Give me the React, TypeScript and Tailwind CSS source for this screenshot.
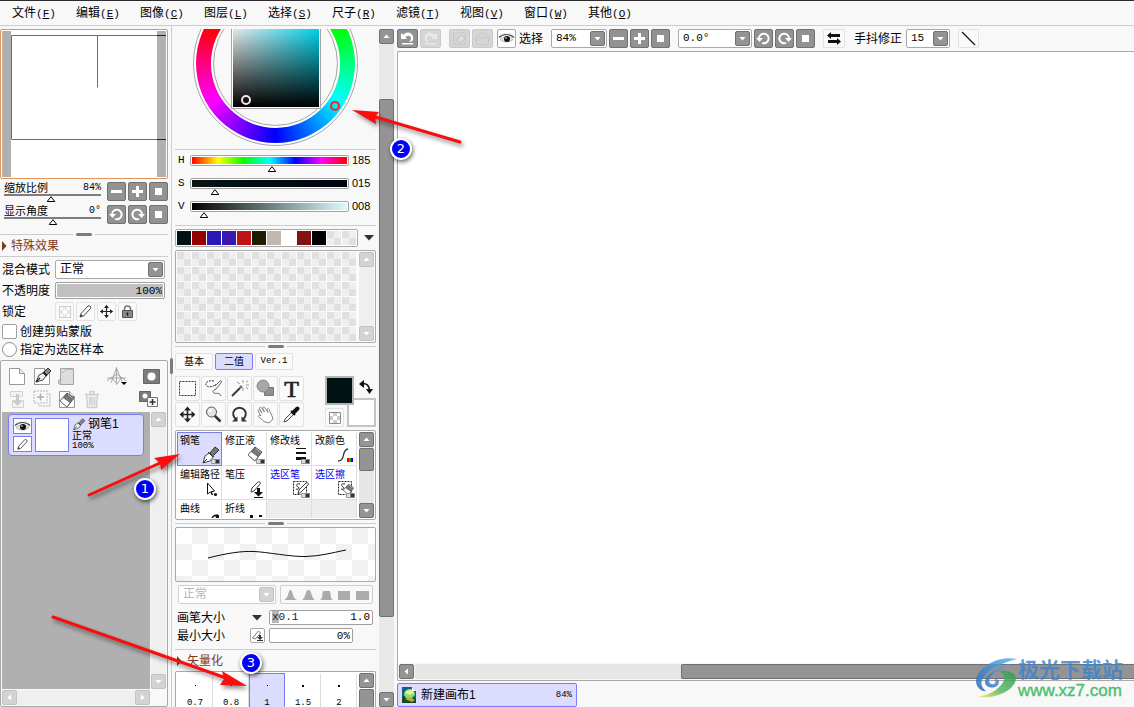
import { useState } from "react";
import type { ReactNode } from "react";

const menus = [
  ["文件", "F"], ["编辑", "E"], ["图像", "C"], ["图层", "L"], ["选择", "S"],
  ["尺子", "R"], ["滤镜", "T"], ["视图", "V"], ["窗口", "W"], ["其他", "O"],
];

const swatches = ["#001214", "#940000", "#2819b4", "#3b17b0", "#c01316", "#1c1c02", "#c2b8b2", "#ffffff", "#831213", "#000000", "", ""];

type IconProps = { className?: string };

/* ---------- icons ---------- */

function Triangle({ dir = "down", className = "w-[7px] h-[7px]" }: { dir?: string; className?: string }) {
  const paths: Record<string, string> = {
    down: "M0.5 2H6.5L3.5 5.5Z",
    up: "M0.5 5H6.5L3.5 1.5Z",
    left: "M5 0.5V6.5L1.5 3.5Z",
    right: "M2 0.5V6.5L5.5 3.5Z",
  };
  return <svg viewBox="0 0 7 7" className={className}><path d={paths[dir]} fill="currentColor" /></svg>;
}

function SectionMark() {
  return <svg viewBox="0 0 6 10" className="h-[10px] w-[6px]"><path d="M1 0v10l4.500-5z" fill="currentColor" /></svg>;
}

function MenuMark() {
  return <svg viewBox="0 0 10 6" className="h-[6px] w-[10px]"><path d="M0 0h10L5 5.500z" fill="#333" /></svg>;
}

function Minus() {
  return <svg viewBox="0 0 17 17" className="w-[17px] h-[17px]"><path d="M3 7h11v3H3z" fill="#fff" /></svg>;
}

function Plus() {
  return <svg viewBox="0 0 17 17" className="w-[17px] h-[17px]"><path d="M3 7h4V3h3v4h4v3h-4v4H7v-4H3z" fill="#fff" /></svg>;
}

function Square() {
  return <svg viewBox="0 0 17 17" className="w-[17px] h-[17px]"><path d="M5 5h7v7H5z" fill="#fff" /></svg>;
}

function RotateLeft({ flip = false }) {
  return (
    <svg viewBox="0 0 17 17" className="w-[17px] h-[17px]">
      <g transform={flip ? "matrix(-1 0 0 1 17 0)" : undefined}>
        <path d="M4 8.500a4.800 4.800 0 1 1 3 4.400" fill="none" stroke="#fff" strokeWidth="2" />
        <path d="M1 8h7l-3.500 4z" fill="#fff" />
      </g>
    </svg>
  );
}

function Undo({ flip = false }) {
  return (
    <svg viewBox="0 0 19 17" className="w-[19px] h-[17px]">
      <g transform={flip ? "matrix(-1 0 0 1 19 0)" : undefined} opacity={flip ? 0.45 : 1}>
        <path d="M3 3v6h6L7.400 7.200C10 4.500 13 5.500 13 8.500 13 10 12 11 10.500 11.500H14C17 8 14.500 2.500 10 2.500 8 2.500 6.500 3.500 5.200 4.800Z" fill="#fff" />
        <path d="M4 13h11v1.500H4z" fill="#fff" />
      </g>
    </svg>
  );
}

function Eye() {
  return (
    <svg viewBox="0 0 17 15" className="w-[17px] h-[15px]">
      <path d="M1 6.500C5 2.500 12 2.500 16 6.500" fill="none" stroke="#444" strokeWidth="1.200" />
      <path d="M2 8.500C5 5 12 5 15 8.500 12 11.500 6 12 2 8.500Z" fill="#e4e4e4" stroke="#999" strokeWidth=".7" />
      <circle cx="9" cy="8" r="3" fill="#111" />
      <circle cx="8" cy="7" r=".8" fill="#fff" />
      <path d="M3 3.500l1 1M6 2l.5 1.500M12 2l-.5 1.500M15 3.500l-1 1" stroke="#999" strokeWidth=".7" />
    </svg>
  );
}

function Pencil({ className = "w-[15px] h-[15px]" }: IconProps) {
  return (
    <svg viewBox="0 0 15 15" className={className}>
      <path d="M2 13l1-3.500L10 2c1.500-1 3.500.8 2.500 2.500L5.500 12z" fill="#fff" stroke="#444" />
      <path d="M2 13l1-3 2 2z" fill="#444" />
    </svg>
  );
}

function Nib({ className = "w-[20px] h-[20px]" }: IconProps) {
  return (
    <svg viewBox="0 0 20 20" className={className}>
      <path d="M11 6l4.500-5L19 4.500 14 9z" fill="#888" stroke="#333" />
      <path d="M9.500 6l4.500 4.500-2 1.500L8 8z" fill="#444" />
      <path d="M8 7.500L4 10.500 2 18l7-2 3.500-4.500z" fill="#eee" stroke="#333" />
      <path d="M2 18l5-5.500" stroke="#333" />
    </svg>
  );
}

function EraserShape() {
  return (
    <>
      <path d="M3 11l7-8 7 5-7 9z" fill="#777" stroke="#333" strokeWidth=".8" />
      <path d="M3 11l3-3.500 7 5-3 4.500z" fill="#fff" stroke="#666" strokeWidth=".8" />
      <path d="M11 4.500l5 4" stroke="#bbb" />
    </>
  );
}

function Move({ className = "w-[19px] h-[19px]" }: IconProps) {
  return (
    <svg viewBox="0 0 19 19" className={className}>
      <path d="M9.500 3v13M3 9.500h13" stroke="#222" strokeWidth="1.500" />
      <path d="M9.500 1l3 4h-6zM9.500 18l3-4h-6zM1 9.500l4-3v6zM18 9.500l-4-3v6z" fill="#222" />
    </svg>
  );
}

function Checks() {
  return (
    <svg viewBox="0 0 12 12" className="w-3 h-3">
      <path d="M.5.5h11v11H.5z" fill="#fff" stroke="#888" />
      <path d="M4 1h4v3H4zM1 4h3v4H1zM8 4h3v4H8zM4 8h4v3H4z" fill="#ccc" />
    </svg>
  );
}

function Page({ children }: { children?: ReactNode }) {
  return (
    <svg viewBox="0 0 20 20" className="w-5 h-5">
      <path d="M2.500 2.500h10l5 5v11h-15z" fill="#fff" stroke="#999" />
      <path d="M12.500 2.500v5h5" fill="#e6e6e6" stroke="#999" />
      {children}
    </svg>
  );
}

/* ---------- controls ---------- */

function SolidButton({ label, children, wide = false, disabled = false }: { label: string; children?: ReactNode; wide?: boolean; disabled?: boolean }) {
  return (
    <button
      type="button"
      aria-label={label}
      disabled={disabled}
      className={`${wide ? "w-[21px]" : "w-[19px]"} ${disabled ? "bg-[#d5d5d5] border-[#cacaca]" : "bg-[#929292] border-[#717171]"} h-[19px] shrink-0 flex items-center justify-center rounded-[2px] border`}
    >
      {children}
    </button>
  );
}

function ScrollButton({ dir, light = false }: { dir: string; light?: boolean }) {
  return (
    <button
      type="button"
      aria-label={`scroll ${dir}`}
      className={`${light ? "bg-[#d3d3d3] border-[#c2c2c2]" : "bg-[#949494] border-[#707070]"} w-[15px] h-[15px] shrink-0 flex items-center justify-center rounded-[2px] border text-white`}
    >
      <Triangle dir={dir} />
    </button>
  );
}

function Dropdown({ label, value, className, disabled = false }: { label: string; value: string; className: string; disabled?: boolean }) {
  return (
    <div className={`relative h-[19px] rounded-[2px] border bg-white ${disabled ? "border-[#d0d0d0]" : "border-[#a9a9a9]"} ${className}`}>
      <select aria-label={label} disabled={disabled} className={`block w-full h-[17px] appearance-none bg-transparent pl-1 leading-[17px] outline-none ${disabled ? "text-[#b5b5b5]" : ""}`}>
        <option>{value}</option>
      </select>
      <span className={`pointer-events-none absolute right-px top-px flex h-[15px] w-[15px] items-center justify-center rounded-[2px] border text-white ${disabled ? "bg-[#d3d3d3] border-[#c2c2c2]" : "bg-[#949494] border-[#707070]"}`}>
        <Triangle />
      </span>
    </div>
  );
}

function GhostButton({ label, className = "w-[19px] h-[19px]", children }: { label: string; className?: string; children?: ReactNode }) {
  return (
    <button type="button" aria-label={label} className={`${className} shrink-0 flex items-center justify-center rounded-[2px] border border-[#e2e2e2] bg-[#fafafa]`}>
      {children}
    </button>
  );
}

function Grip() {
  return (
    <div className="flex h-[7px] items-center gap-[3px]">
      <div className="h-px flex-1 bg-[#cdcdcd]" />
      <div className="h-[3px] w-4 rounded-full bg-[#7b7b7b]" />
      <div className="h-px flex-1 bg-[#cdcdcd]" />
    </div>
  );
}

function Pointer({ percent }: { percent: number }) {
  return (
    <svg viewBox="0 0 9 6" className="h-[6px] w-[9px] -translate-x-1/2" style={{ marginLeft: `${percent}%` }}>
      <path d="M4.500.7L8.300 5.500H.7z" fill="#fff" stroke="#000" />
    </svg>
  );
}

/* ---------- left column ---------- */

function NavSlider({ label, value, percent }: { label: string; value: string; percent: number }) {
  return (
    <div className="h-[19px] w-[97px]">
      <label className="flex h-[12px] items-center justify-between text-[11px] leading-[12px]">
        {label}
        <span className="font-['Liberation_Mono',monospace] text-[10px]">{value}</span>
        <input type="range" defaultValue={percent} className="sr-only" />
      </label>
      <div className="h-[2px] bg-[#7d7d7d]" />
      <Pointer percent={percent} />
    </div>
  );
}

function Navigator() {
  return (
    <>
      <div className="h-[150px] rounded-[2px] border border-[#e0935a] bg-white p-px">
        <svg viewBox="0 0 164 146" preserveAspectRatio="none" className="h-full w-full">
          <path d="M0 0h9v146H0zM155 0h9v146h-9z" fill="#b0b0b0" />
          <path d="M155 4.500H9.500v104H155M95.500 4.500v52" fill="none" stroke="#6d6d6d" />
          <path d="M155 4.500h9M155 108.500h9" stroke="#222" />
        </svg>
      </div>
      <div className="mt-[3px] flex flex-col gap-1 pl-1">
        <div className="flex h-[19px] gap-[2px]">
          <NavSlider label="缩放比例" value="84%" percent={48} />
          <div className="w-[2px]" />
          <SolidButton label="缩小"><Minus /></SolidButton>
          <SolidButton label="放大"><Plus /></SolidButton>
          <SolidButton label="重置缩放"><Square /></SolidButton>
        </div>
        <div className="flex h-[19px] gap-[2px]">
          <NavSlider label="显示角度" value="0° " percent={50} />
          <div className="w-[2px]" />
          <SolidButton label="左旋"><RotateLeft /></SolidButton>
          <SolidButton label="右旋"><RotateLeft flip /></SolidButton>
          <SolidButton label="重置角度"><Square /></SolidButton>
        </div>
      </div>
    </>
  );
}

function LayerOptions() {
  return (
    <>
      <div className="mt-[7px]"><Grip /></div>
      <h2 className="flex h-[19px] items-center gap-1 border-b border-[#cdcdcd] pb-[3px] pl-px text-[#7d3a1c]">
        <SectionMark />特殊效果
      </h2>
      <div className="flex flex-col gap-[3px] pl-[2px] pr-[3px] pt-[3px]">
        <div className="flex h-[19px] items-center">
          <span className="w-[53px]">混合模式</span>
          <Dropdown label="混合模式" value="正常" className="flex-1" />
        </div>
        <label className="flex h-[17px] items-center">
          <span className="w-[53px]">不透明度</span>
          <input defaultValue="100%" className="h-[17px] w-0 flex-1 rounded-[2px] border border-[#a0a0a0] bg-[#c0c0c0] px-[2px] text-right font-['Liberation_Mono',monospace] text-[11px] shadow-[inset_0_0_0_1px_#fff] outline-none" />
        </label>
        <div className="flex h-[19px] items-center gap-[2px]">
          <span className="w-[51px]">锁定</span>
          <GhostButton label="锁定透明"><span className="opacity-40"><Checks /></span></GhostButton>
          <GhostButton label="锁定绘画"><Pencil /></GhostButton>
          <GhostButton label="锁定移动"><Move className="h-[15px] w-[15px]" /></GhostButton>
          <GhostButton label="锁定全部">
            <svg viewBox="0 0 13 13" className="h-[13px] w-[13px]">
              <path d="M3.500 6V4a3 3 0 0 1 6 0v2" fill="none" stroke="#777" strokeWidth="1.500" />
              <path d="M1.500 5.500h10v7h-10z" fill="#888" stroke="#555" />
              <path d="M6.500 7.500v3" stroke="#111" strokeWidth="1.500" />
            </svg>
          </GhostButton>
        </div>
        <label className="flex h-[15px] items-center gap-[3px]">
          <input type="checkbox" className="h-[15px] w-[15px] appearance-none rounded-[2px] border border-[#a0a0a0] bg-white" />
          创建剪贴蒙版
        </label>
        <label className="flex h-[15px] items-center gap-[3px]">
          <input type="radio" className="h-[15px] w-[15px] appearance-none rounded-full border border-[#8c8c8c] bg-white" />
          指定为选区样本
        </label>
      </div>
    </>
  );
}

function LayerTools() {
  return (
    <div className="h-[51px] px-[5px] pt-1">
      <div className="flex h-[22px] items-center">
        <button type="button" aria-label="新建图层"><Page /></button>
        <button type="button" aria-label="新建钢笔图层" className="ml-[5px]">
          <Page>
            <path d="M12 6l4-4 3 3-4 4z" fill="#888" stroke="#333" />
            <path d="M11 7L7 9l-3 7 7-2 3-4z" fill="#eee" stroke="#444" />
            <path d="M4 16l4-4M11 6l4 4" stroke="#222" strokeWidth="1.200" />
          </Page>
        </button>
        <button type="button" aria-label="新建图层组" className="ml-[5px]">
          <svg viewBox="0 0 20 20" className="h-5 w-5">
            <path d="M3.500 2.500h13v16h-13zM3.500 12.500l-2 2v3l2 1" fill="#ddd" stroke="#a5a5a5" />
            <path d="M3.500 6.500h3l2-3h8" fill="none" stroke="#bbb" />
          </svg>
        </button>
        <button type="button" aria-label="透视尺" className="ml-[29px]">
          <svg viewBox="0 0 22 20" className="h-5 w-[22px]">
            <path d="M10.500 1v18M1 12h19M10.500 2L5 17M10.500 2l6 15M1 15l10-7 9 7M5 11l6 7 5-7" fill="none" stroke="#999" strokeWidth=".8" />
            <path d="M15 16h6l-3 3z" fill="#000" />
          </svg>
        </button>
        <button type="button" aria-label="新建蒙版" className="ml-[14px]">
          <svg viewBox="0 0 20 20" className="h-5 w-5"><path d="M1.500 3.500h16v14h-16z" fill="#7b7b7b" stroke="#666" /><circle cx="9.500" cy="10.500" r="4" fill="#fff" /></svg>
        </button>
      </div>
      <div className="flex h-[24px] items-center">
        <button type="button" aria-label="向下合并" className="opacity-40">
          <svg viewBox="0 0 20 20" className="h-5 w-5"><path d="M3.500 2.500h12v5h-12zM5.500 11.500h11v7h-11z" fill="#eee" stroke="#999" /><path d="M9 5h3v7h3l-4.500 5L6 12h3z" fill="#888" /></svg>
        </button>
        <button type="button" aria-label="复制图层" className="ml-[5px] opacity-50">
          <svg viewBox="0 0 20 20" className="h-5 w-5"><path d="M2 2h13v12H2z" fill="none" stroke="#777" strokeDasharray="2 1" /><path d="M16 5h2v12H7v-2" fill="none" stroke="#999" /><path d="M8.500 4.500v7M5 8h7" stroke="#666" strokeWidth="1.500" /></svg>
        </button>
        <button type="button" aria-label="清除图层" className="ml-[5px]"><Page><g transform="translate(0 1)"><EraserShape /></g></Page></button>
        <button type="button" aria-label="删除图层" className="ml-[5px] opacity-30">
          <svg viewBox="0 0 20 20" className="h-5 w-5"><path d="M3 5.500h14M8 5V2.500h4V5M4.500 6l1 12.500h9l1-12.500M8 8v8M10 8v8M12.500 8v8" fill="#ddd" stroke="#777" strokeWidth="1.500" /></svg>
        </button>
        <button type="button" aria-label="添加蒙版" className="ml-[35px]">
          <svg viewBox="0 0 22 20" className="h-5 w-[22px]"><path d="M2.500 2.500h11v10h-11z" fill="#7b7b7b" stroke="#666" /><circle cx="8" cy="7" r="2.500" fill="#fff" /><path d="M10.500 8.500h10v9h-10z" fill="#f4f4f4" stroke="#777" /><path d="M15.500 10v6M12.500 13h6" stroke="#333" strokeWidth="1.500" /></svg>
        </button>
      </div>
    </div>
  );
}

function LayerPanel() {
  return (
    <section className="mt-[3px] flex min-h-0 flex-1 flex-col rounded-[2px] border border-[#a9a9a9] bg-[#f8f8f8] px-px pb-px">
      <LayerTools />
      <div className="flex min-h-0 flex-1 gap-px">
        <div className="flex-1 bg-[#b0b0b0] px-[6px] pt-[2px]">
          <div className="flex h-[42px] gap-[3px] rounded-[4px] border border-[#7b7bf4] bg-[#dcdcff] p-[3px] pl-1">
            <div className="flex flex-col gap-[2px]">
              <button type="button" aria-label="显示图层" className="flex h-[16px] w-[19px] items-center justify-center border border-[#7b7bf4] bg-white"><Eye /></button>
              <button type="button" aria-label="编辑图层" className="flex h-[16px] w-[19px] items-center justify-center border border-[#7b7bf4] bg-white"><Pencil className="h-[13px] w-[13px]" /></button>
            </div>
            <div className="h-[34px] w-[34px] border border-[#7b7bf4] bg-white" />
            <div className="text-[10px] leading-[11px]">
              <div className="flex h-[12px] items-center gap-[2px] text-[12px] leading-[12px]"><Nib className="h-[13px] w-[14px]" />钢笔1</div>
              <div>正常</div>
              <div className="font-['Liberation_Mono',monospace] text-[9px] leading-[11px]">100%</div>
            </div>
          </div>
        </div>
        <div className="flex w-[15px] flex-col justify-between bg-[#efefef]">
          <ScrollButton dir="up" light />
          <ScrollButton dir="down" light />
        </div>
      </div>
      <div className="mr-4 mt-px flex justify-between bg-[#efefef]">
        <ScrollButton dir="left" light />
        <ScrollButton dir="right" light />
      </div>
    </section>
  );
}

/* ---------- middle column ---------- */

function ColorWheel() {
  return (
    <div className="flex h-[117px] items-end justify-center overflow-hidden">
      <div className="h-[165px] w-[165px] shrink-0 rounded-full border border-[#a3a3a3] bg-white p-[2px]">
        <div className="h-full w-full rounded-full bg-[conic-gradient(from_-60deg,#f00,#ff0,#0f0,#0ff,#00f,#f0f,#f00)] p-[15px]">
          <div className="h-full w-full rounded-full bg-white p-[2px]">
            <div className="relative flex h-full w-full items-center justify-center rounded-full border border-[#a3a3a3] bg-[#f8f8f8]">
              <div className="h-[90px] w-[90px] shrink-0 border border-[#a3a3a3] bg-white p-px">
                <div className="relative h-full w-full bg-[linear-gradient(to_top,#000,transparent),linear-gradient(to_right,#fff,#00e5ff)]">
                  <span className="absolute bottom-[2px] left-[8px] h-[10px] w-[10px] rounded-full border-2 border-[#f7e4e0]" />
                </div>
              </div>
              <span className="absolute -right-[3px] bottom-[14px] h-[10px] w-[10px] rounded-full border-2 border-[#f0281c]" />
            </div>
          </div>
        </div>
      </div>
    </div>
  );
}

function ColorSlider({ name, value, max, fill }: { name: string; value: string; max: number; fill: string }) {
  return (
    <label className="flex h-[23px] items-start text-[11px] leading-[11px]">
      <span className="w-[15px] pl-[3px] font-['Liberation_Mono',monospace]">{name}</span>
      <span className="w-[159px]">
        <span className="block h-[11px] rounded-[2px] border border-[#a3a3a3] bg-white p-px">
          <span className={`block h-[7px] ${fill}`} />
        </span>
        <span className="block px-[2px]"><Pointer percent={(Number(value) / max) * 100} /></span>
      </span>
      <span className="pl-[3px]">{value}</span>
      <input type="range" max={max} defaultValue={Number(value)} className="sr-only" />
    </label>
  );
}

function CheckTile() {
  return <span className="h-[14px] w-[14px] bg-[conic-gradient(#efefef_25%,#e0e0e0_0_50%,#efefef_0_75%,#e0e0e0_0)]" />;
}

function Palette() {
  return (
    <>
      <div className="mt-[3px] flex h-[18px] items-center">
        <div className="flex h-[18px] w-[183px] gap-px rounded-[2px] border border-[#a9a9a9] bg-white p-px">
          {swatches.map((c, i) => c
            ? <button key={i} type="button" aria-label={c} className="h-[14px] w-[14px]" style={{ backgroundColor: c }} />
            : <CheckTile key={i} />)}
        </div>
        <button type="button" aria-label="颜色菜单" className="ml-[6px]"><MenuMark /></button>
      </div>
      <div className="mt-[3px] flex h-[93px] gap-[2px] rounded-[2px] border border-[#a9a9a9] bg-[#fbfbfb] p-px">
        <div className="grid w-[180px] grid-cols-12 gap-y-px">
          {Array.from({ length: 72 }, (_, i) => <CheckTile key={i} />)}
        </div>
        <div className="flex w-[15px] flex-col justify-between bg-[#efefef]">
          <ScrollButton dir="up" light />
          <ScrollButton dir="down" light />
        </div>
      </div>
    </>
  );
}

const baseTools: [string, ReactNode][] = [
  ["选择", <path d="M2.500 3.500h16v14h-16z" fill="none" stroke="#333" strokeDasharray="2 1" />],
  ["套索", <><path d="M11 3C6 2 2 4 3 7s8 2 10-1" fill="none" stroke="#333" strokeDasharray="2 1" /><path d="M12 8l5-5c2-1 2 1 0 3l-4 5c-3 1-4 3-2 4s6-1 7 3" fill="none" stroke="#666" /></>],
  ["魔棒", <><path d="M3 18l8-8" stroke="#333" strokeWidth="1.800" /><path d="M11 10l2-2" stroke="#777" strokeWidth="2.500" /><path d="M14 2v3M14 10v3M8 4l3 2M17 7h3M17 4l2-1M17 9l2 2" stroke="#999" /></>],
  ["形状", <><path d="M9.500 9.500h9v8h-9z" fill="#8f8f8f" stroke="#777" /><circle cx="8" cy="8" r="6" fill="#a7a7a7" stroke="#888" /></>],
  ["文字", null],
  ["移动", <><path d="M10.500 4v13M4 10.500h13" stroke="#222" strokeWidth="1.600" /><path d="M10.500 2.500l3.500 4H7zM10.500 18.500l3.500-4H7zM2.500 10.500l4-3.500v7zM18.500 10.500l-4-3.500v7z" fill="#222" /></>],
  ["缩放", <><path d="M11.500 11.500l6 6" stroke="#333" strokeWidth="2.500" /><circle cx="8.500" cy="8" r="5" fill="#e4e4e4" stroke="#555" /><path d="M5.500 7.500l3-2" stroke="#fff" strokeWidth="2" /></>],
  ["旋转", <><path d="M7.500 15.500A6.300 6.300 0 1 1 13.500 15.500" fill="none" stroke="#333" strokeWidth="2" /><path d="M3 17.500h5.500v-5zM18 17.500h-5.500v-5z" fill="#333" /></>],
  ["抓手", <path d="M6 12L3 7c0-1.500 1.500-1.500 2.500 0L7 9 4.500 4.500c0-1.500 1.500-1.500 2.500 0l2.500 3.500L7.500 4c.5-1.500 2-1 2.500 0l3 4.500-1-3c1-1.500 2-.5 2.500 1L17 12l1 3-4 4-5-1.500-5.500-5c0-1.500 1.500-1.500 2.500-.5z" fill="#fff" stroke="#777" strokeWidth=".9" />],
  ["取色", <><path d="M3 18l1-3 7-7 2 2-7 7z" fill="#eee" stroke="#555" /><path d="M10 7l4 4" stroke="#111" strokeWidth="2" /><path d="M12.500 8.500l4-4" stroke="#111" strokeWidth="4" strokeLinecap="round" /></>],
];

function ToolBox() {
  return (
    <div className="mt-[6px] flex h-[51px] justify-between">
      <div className="grid grid-cols-5 gap-px">
        {baseTools.map(([name, art]) => (
          <GhostButton key={name} label={name} className="h-[25px] w-[25px]">
            {art
              ? <svg viewBox="0 0 21 21" className="h-[21px] w-[21px]">{art}</svg>
              : <span className="font-['Liberation_Serif',serif] text-[24px] leading-[20px] text-[#222] [-webkit-text-stroke:0.7px_#222]">T</span>}
          </GhostButton>
        ))}
      </div>
      <div className="grid grid-cols-[22px_7px_22px] grid-rows-[22px_7px_22px]">
        <button type="button" aria-label="背景色" className="col-span-2 col-start-2 row-span-2 row-start-2 border-2 border-[#c4c4c4] bg-white" />
        <button type="button" aria-label="前景色" className="col-span-2 col-start-1 row-span-2 row-start-1 border-2 border-[#b5b5b5] bg-[#001214]" />
        <button type="button" aria-label="交换颜色" className="col-start-3 row-start-1 ml-[5px]">
          <svg viewBox="0 0 14 14" className="h-[14px] w-[14px]"><path d="M4 4c4-1 6 2 6.500 6" fill="none" stroke="#111" strokeWidth="1.500" /><path d="M0 4l5-4v8zM7 9h7l-3.500 5z" fill="#111" /></svg>
        </button>
        <div className="col-start-1 row-start-3 flex items-end">
          <GhostButton label="透明色"><Checks /></GhostButton>
        </div>
      </div>
    </div>
  );
}

const blocks = <><path d="M14.500 13.500h4v4h-4z" fill="#ddd" stroke="#999" /><path d="M18.500 13.500h4v4h-4z" fill="#333" stroke="#888" /></>;

const brushes: [string, ReactNode][] = [
  ["钢笔", <><path d="M13 7l5-6 4 3-6 6z" fill="#777" stroke="#333" /><path d="M12 7L8 10l-2 7 7-2 4-5z" fill="#fff" stroke="#444" /><path d="M6 17l4-4M11 6l5 5" stroke="#333" />{blocks}</>],
  ["修正液", <><g transform="translate(3 -2)"><EraserShape /></g>{blocks}</>],
  ["修改线", <><path d="M9 2h10v1H9zM9 6h10v2H9zM9 11h10v3H9z" fill="#111" />{blocks}</>],
  ["改颜色", <><path d="M6 15c8 0 3-11 10-12" fill="none" stroke="#333" strokeWidth="1.300" /><path d="M15 12h2v4h-2z" fill="#f00" /><path d="M17 12h2v4h-2z" fill="#0b0" /><path d="M19 12h2v4h-2z" fill="#00f" /></>],
  ["编辑路径", <><path d="M10.500 3v11l3-2 4-1z" fill="#fff" stroke="#111" /><path d="M14 12l1.500 3" stroke="#111" strokeWidth="1.500" /><circle cx="18.500" cy="14.500" r="1.600" fill="#111" /></>],
  ["笔压", <><path d="M9 12l1-4 6-6c2-1 3 1 2 2l-6 7z" fill="#fff" stroke="#444" /><path d="M15 8h3v4h3l-4.500 4.500L12 12h3zM12 17h9v1.500h-9z" fill="#111" /></>],
  ["选区笔", <><path d="M6.500 1.500h13v13h-13z" fill="none" stroke="#222" strokeDasharray="2 1" /><path d="M13 4C9 3 9 6 11 7s1 3-2 2" fill="none" stroke="#222" /><path d="M11 14l1-4 7-7c2-1 3 1 2 2l-7 7z" fill="#fff" stroke="#444" />{blocks}</>],
  ["选区擦", <><path d="M6.500 1.500h13v13h-13z" fill="none" stroke="#222" strokeDasharray="2 1" /><path d="M13 4C9 3 9 6 11 7s1 3-2 2" fill="none" stroke="#222" /><g transform="translate(9 2) scale(.75)"><EraserShape /></g>{blocks}</>],
  ["曲线", <><path d="M15 4c1-2 3-3 6-3" fill="none" stroke="#111" strokeWidth="1.300" /><path d="M18 1h4v3h-3z" fill="#111" /></>],
  ["折线", <path d="M8 1h3v3H8zM17 1h3v2h-3z" fill="#111" />],
  ["", null],
  ["", null],
];

function BrushGrid() {
  const [active, setActive] = useState(0);
  return (
    <div className="flex h-[90px] gap-[2px] rounded-[2px] border border-[#a9a9a9] bg-white p-px">
      <div className="grid w-[180px] auto-rows-[34px] grid-cols-4 overflow-hidden">
        {brushes.map(([name, art], i) => name ? (
          <button
            key={i}
            type="button"
            onClick={() => setActive(i)}
            className={`flex flex-col justify-start border pl-[2px] pt-[2px] text-left text-[10px] leading-[11px] ${i === active ? "border-[#7b7bf4] bg-[#dcdcff]" : "border-transparent border-r-[#dedede] border-b-[#dedede]"} ${name.startsWith("选区") ? "text-[#0000f0]" : ""}`}
          >
            <span className="whitespace-nowrap">{name}</span>
            <svg viewBox="-2 0 26 18" className="h-[18px] w-[26px] shrink-0 self-end">{art}</svg>
          </button>
        ) : <div key={i} className="border-r border-[#dedede] bg-[#ededed]" />)}
      </div>
      <div className="flex w-[15px] flex-col bg-[#e6e6e6]">
        <ScrollButton dir="up" />
        <div className="mt-px h-[23px] rounded-[2px] border border-[#707070] bg-[#949494]" />
        <div className="flex-1" />
        <ScrollButton dir="down" />
      </div>
    </div>
  );
}

function BrushSettings() {
  return (
    <>
      <div className="h-[55px] rounded-[2px] border border-[#a9a9a9] bg-[conic-gradient(#f1f1f1_25%,#fff_0_50%,#f1f1f1_0_75%,#fff_0)] bg-[length:32px_32px]">
        <svg viewBox="0 0 199 53" className="h-[53px] w-[199px]">
          <path d="M32 30C52 25 65 23 78 23.500S115 29 130 28.500S155 25 170 22" fill="none" stroke="#001214" />
        </svg>
      </div>
      <div className="mt-[3px] flex h-[19px] justify-between px-[3px]">
        <Dropdown label="笔刷模式" value="正常" disabled className="w-[98px]" />
        <div className="flex w-[93px] items-center justify-center rounded-[2px] border border-[#cfcfcf]">
          <svg viewBox="0 0 87 12" className="h-3 w-[87px]" fill="#ababab">
            <path d="M1 11C6 9 5 1 7.500 1S9 9 14 11zM19 11C23 9 22 1 25.500 1S28 9 32 11zM37 11C41 9 38 2 41 2h5c3 0 0 7 4 9zM55 11V2h12v9zM73 2h13v9H73z" />
          </svg>
        </div>
      </div>
      <div className="mt-[6px] flex h-[15px] items-center pl-[2px] pr-[3px]">
        <label htmlFor="size" className="w-[75px]">画笔大小</label>
        <button type="button" aria-label="大小菜单"><MenuMark /></button>
        <div className="ml-[7px] flex h-[15px] flex-1 items-center justify-between rounded-[2px] border border-[#a0a0a0] bg-white px-[2px] font-['Liberation_Mono',monospace] text-[11px] leading-[13px]">
          <span className="text-[#222]"><span className="bg-[#b8b8b8]">x</span>0.1</span>
          <input id="size" defaultValue="1.0" className="w-10 bg-transparent text-right outline-none" />
        </div>
      </div>
      <div className="mt-[3px] flex h-[15px] items-center pl-[2px]">
        <label htmlFor="min" className="w-[73px]">最小大小</label>
        <button type="button" aria-label="笔压控制" className="flex h-[15px] w-[15px] items-center justify-center rounded-[2px] border border-[#a9a9a9] bg-white">
          <svg viewBox="0 0 13 13" className="h-[13px] w-[13px]"><path d="M1.500 9l6-7 2 2-5 6z" fill="#fff" stroke="#777" /><path d="M8 6h2v2h2l-3 3-3-3h2zM6 11h6v1H6z" fill="#333" /></svg>
        </button>
        <input id="min" defaultValue="0%" className="ml-1 h-[15px] w-[84px] rounded-[2px] border border-[#a0a0a0] bg-white px-[2px] text-right font-['Liberation_Mono',monospace] text-[11px] outline-none" />
      </div>
      <h2 className="mt-[6px] flex h-[22px] items-center gap-[5px] border-t border-[#cdcdcd] pl-px text-[#7d3a1c]">
        <SectionMark />矢量化
      </h2>
      <div className="flex min-h-0 flex-1 gap-[2px] overflow-hidden rounded-t-[2px] border border-b-0 border-[#a9a9a9] bg-white p-px pb-0">
        <div className="grid w-[180px] grid-cols-5">
          {["0.7", "0.8", "1", "1.5", "2"].map((size, i) => (
            <button
              key={size}
              type="button"
              className={`flex flex-col items-center border border-b-0 pt-[11px] font-['Liberation_Mono',monospace] text-[9px] leading-[10px] ${size === "1" ? "border-[#7b7bf4] bg-[#dcdcff]" : "border-transparent border-r-[#dedede]"}`}
            >
              <span className="flex h-[2px] items-start"><span className={i < 3 ? "h-px w-px bg-black" : "h-[2px] w-[2px] bg-black"} /></span>
              <span className="mt-[11px]">{size}</span>
            </button>
          ))}
        </div>
        <div className="flex w-[15px] flex-col">
          <ScrollButton dir="up" />
          <div className="mt-px flex-1 rounded-t-[2px] border border-b-0 border-[#707070] bg-[#949494]" />
        </div>
      </div>
    </>
  );
}

function MiddleColumn() {
  const [tab, setTab] = useState("二值");
  return (
    <div className="flex w-[226px] shrink-0 justify-between border-l border-[#cdcdcd] pl-[3px] pr-[3px] pt-[3px]">
      <div className="flex min-h-0 w-[201px] flex-col">
        <ColorWheel />
        <div className="mt-[3px] border-t border-[#cdcdcd] pt-[5px]">
          <ColorSlider name="H" value="185" max={360} fill="bg-[linear-gradient(to_right,#f00,#ff0,#0f0,#0ff,#00f,#f0f,#f00)]" />
          <ColorSlider name="S" value="015" max={100} fill="bg-[linear-gradient(to_right,#121414,#001214_20%,#000510)]" />
          <ColorSlider name="V" value="008" max={100} fill="bg-[linear-gradient(to_right,#000,#d9fcff)]" />
        </div>
        <div className="mt-px h-px shrink-0 bg-[#cdcdcd]" />
        <Palette />
        <Grip />
        <div className="mt-[3px] flex h-[17px] gap-[2px] text-[10px] leading-[15px]">
          {["基本", "二值", "Ver.1"].map((name) => (
            <button
              key={name}
              type="button"
              onClick={() => setTab(name)}
              className={`w-[38px] rounded-[2px] border ${tab === name ? "border-[#7b7bf4] bg-[#dcdcff]" : "border-[#e2e2e2] bg-[#fafafa]"} ${name === "Ver.1" ? "font-['Liberation_Mono',monospace] text-[9px]" : ""}`}
            >
              {name}
            </button>
          ))}
        </div>
        <ToolBox />
        <div className="h-[3px]" />
        <BrushGrid />
        <Grip />
        <BrushSettings />
      </div>
      <div className="flex w-[15px] flex-col bg-[#e8e8e8]">
        <ScrollButton dir="up" />
        <div className="h-[55px]" />
        <div className="h-[518px] rounded-[2px] border border-[#707070] bg-[#949494]" />
        <div className="flex-1" />
        <ScrollButton dir="down" />
      </div>
    </div>
  );
}

/* ---------- canvas ---------- */

function Toolbar() {
  return (
    <div className="flex h-[25px] shrink-0 items-center gap-[2px]">
      <SolidButton label="撤销" wide><Undo /></SolidButton>
      <SolidButton label="重做" wide disabled><Undo flip /></SolidButton>
      <div className="w-1" />
      <SolidButton label="取消选择" wide disabled>
        <svg viewBox="0 0 17 17" className="h-[17px] w-[17px]"><path d="M2.500 2.500h12v12h-12z" fill="none" stroke="#c4c4c4" strokeDasharray="2 1" /><path d="M6 10l4-5 4 3-4 5z" fill="#e0e0e0" stroke="#c0c0c0" /></svg>
      </SolidButton>
      <SolidButton label="反选" wide disabled>
        <svg viewBox="0 0 17 17" className="h-[17px] w-[17px]"><path d="M2.500 9V14.500h12V9M4 6C5 2 12 2 13 6M1 7.500h15" fill="none" stroke="#c4c4c4" strokeDasharray="3 1" /></svg>
      </SolidButton>
      <div className="w-0" />
      <button type="button" aria-label="显示选区" className="flex h-[19px] w-[19px] items-center justify-center rounded-[2px] border border-[#a9a9a9] bg-white"><Eye /></button>
      <span className="ml-px w-[30px]">选择</span>
      <Dropdown label="缩放" value="84%" className="w-[56px] font-['Liberation_Mono',monospace] text-[11px]" />
      <SolidButton label="缩小"><Minus /></SolidButton>
      <SolidButton label="放大"><Plus /></SolidButton>
      <SolidButton label="重置缩放"><Square /></SolidButton>
      <div className="w-1" />
      <Dropdown label="角度" value="0.0°" className="w-[74px] font-['Liberation_Mono',monospace] text-[11px]" />
      <SolidButton label="左旋"><RotateLeft /></SolidButton>
      <SolidButton label="右旋"><RotateLeft flip /></SolidButton>
      <SolidButton label="重置角度"><Square /></SolidButton>
      <div className="w-1" />
      <GhostButton label="水平翻转" className="h-[19px] w-[22px]">
        <svg viewBox="0 0 16 13" className="h-[13px] w-4"><path d="M1 3.500L5 0v2h9v3H5v2zM15 9.500L11 6v2H2v3h9v2z" fill="#111" /></svg>
      </GhostButton>
      <span className="ml-[7px] w-[50px]">手抖修正</span>
      <Dropdown label="手抖修正" value="15" className="w-[44px] font-['Liberation_Mono',monospace] text-[11px]" />
      <div className="w-1" />
      <GhostButton label="直线" className="h-[19px] w-[21px]">
        <svg viewBox="0 0 15 15" className="h-[15px] w-[15px]"><path d="M1 1l13 13" stroke="#111" strokeWidth="1.300" /></svg>
      </GhostButton>
    </div>
  );
}

function CanvasArea() {
  return (
    <main className="flex min-w-0 flex-1 flex-col">
      <Toolbar />
      <div className="flex min-h-0 flex-1 flex-col rounded-l-[2px] border border-r-0 border-[#a9a9a9] bg-white">
        <div className="flex-1" />
        <div className="flex h-[17px] bg-[#f8f8f8] pb-px pl-px pt-px">
          <ScrollButton dir="left" />
          <div className="ml-px w-[266px] bg-[#e6e6e6]" />
          <div className="flex-1 rounded-l-[2px] border border-r-0 border-[#707070] bg-[#949494]" />
        </div>
      </div>
      <div className="h-[26px] shrink-0 pt-[2px]">
        <button type="button" className="flex h-[24px] w-[180px] items-center gap-[5px] rounded-[2px] border border-[#7b7bf4] bg-[#dcdcff] px-1">
          <svg viewBox="0 0 14 16" className="h-4 w-[14px]">
            <path d="M0 0h10l4 4v12H0z" fill="#165b96" />
            <path d="M0 10l6-2 8 4v4H0z" fill="#174d1c" />
            <path d="M2 8c0-4 3-6 6-6s5 3 5 6l-4 4-5-1z" fill="#7fe36a" />
            <path d="M3 6c2-4 8-4 9 0l-4 2z" fill="#e7f58a" />
            <path d="M3 12l5-2 5 3-3 2z" fill="#c8a24a" />
            <path d="M10 0v4h4z" fill="#fff" />
          </svg>
          <span className="flex-1 text-left">新建画布1</span>
          <span className="font-['Liberation_Mono',monospace] text-[9px]">84%</span>
        </button>
      </div>
    </main>
  );
}

/* ---------- overlays ---------- */

function Badge({ n, className }: { n: number; className: string }) {
  return (
    <span className={`absolute flex h-[22px] w-[22px] items-center justify-center rounded-full border-2 border-white bg-[#0000fa] font-['DejaVu_Sans',sans-serif] text-[13px] leading-[18px] text-white shadow-[1px_2px_4px_rgba(0,0,0,0.6)] ${className}`}>
      {n}
    </span>
  );
}

function Annotations() {
  return (
    <div className="pointer-events-none absolute left-0 -top-px">
      <svg viewBox="0 0 480 707" className="h-[707px] w-[480px] drop-shadow-[2px_3px_2px_rgba(0,0,0,0.45)]">
        <g stroke="#fb0d0d" strokeWidth="3" strokeLinecap="round">
          <path d="M460 142L372 116M89 495L160 463M53 617L226 678" />
        </g>
        <path d="M352 110l27 2-4 5 1 7zM180 454l-19 16-1-7-6-5zM247 686l-27-1 4-6-2-8z" fill="#fb0d0d" />
      </svg>
      <Badge n={1} className="left-[134px] top-[478px]" />
      <Badge n={2} className="left-[390px] top-[138px]" />
      <Badge n={3} className="left-[240px] top-[652px]" />
    </div>
  );
}

function Watermark() {
  return (
    <div className="pointer-events-none absolute bottom-[8px] right-[11px] flex items-center gap-px">
      <svg viewBox="0 0 42 42" className="h-[42px] w-[42px]">
        <defs>
          <linearGradient id="swirlBlue" x1="0" y1="1" x2="1" y2="0"><stop offset="0" stopColor="#2b66b8" /><stop offset="1" stopColor="#56b6ea" /></linearGradient>
          <linearGradient id="swirlGreen" x1="0" y1="1" x2="1" y2="0"><stop offset="0" stopColor="#f2e84a" /><stop offset=".4" stopColor="#5db86a" /><stop offset="1" stopColor="#2f9a52" /></linearGradient>
        </defs>
        <path d="M42 2C24-2 2 10 1 24c0 6 5 11 10 10C5 30 5 24 10 18 17 10 28 6 42 2z" fill="url(#swirlBlue)" opacity=".85" />
        <path d="M36 7C24 9 12 16 10 24c-1 6 8 9 13 4 3-4-1-7-4-5 2 0 2 3 0 4-4 1-6-2-4-6 3-6 11-9 21-14z" fill="url(#swirlBlue)" opacity=".8" />
        <path d="M22 14c8-1 19 0 19 8-2 11-18 20-38 18 14-3 23-9 26-17 1-5-1-7-7-9z" fill="url(#swirlGreen)" opacity=".85" />
      </svg>
      <div>
        <div className="text-[21px] font-bold leading-[24px] text-[#3f85cf]/85">极光下载站</div>
        <div className="text-[17px] leading-[17px] text-[#4cbf70] [-webkit-text-stroke:0.4px_#4cbf70]">www.xz7.com</div>
      </div>
    </div>
  );
}

export default function App() {
  return (
    <div className="relative flex h-screen w-full flex-col overflow-hidden border-t border-[#2e2b2e] bg-[#f8f8f8] font-['Liberation_Sans','Noto_Sans_CJK_SC',sans-serif] text-[12px] leading-[14px] text-black">
      <nav className="flex h-[25px] shrink-0 items-center border-b border-[#cdcdcd] pl-3">
        {menus.map(([name, key]) => (
          <button key={key} type="button" className="w-16 text-left">
            {name}<span className="font-['Liberation_Mono',monospace] text-[11px]">(<u>{key}</u>)</span>
          </button>
        ))}
      </nav>
      <div className="flex min-h-0 flex-1">
        <aside className="flex w-[171px] shrink-0 flex-col pr-[3px] pt-[3px]">
          <Navigator />
          <LayerOptions />
          <LayerPanel />
        </aside>
        <MiddleColumn />
        <CanvasArea />
      </div>
      <span className="absolute left-[170px] top-[357px] h-4 w-[3px] rounded-full bg-[#7b7b7b]" />
      <Annotations />
      <Watermark />
    </div>
  );
}
